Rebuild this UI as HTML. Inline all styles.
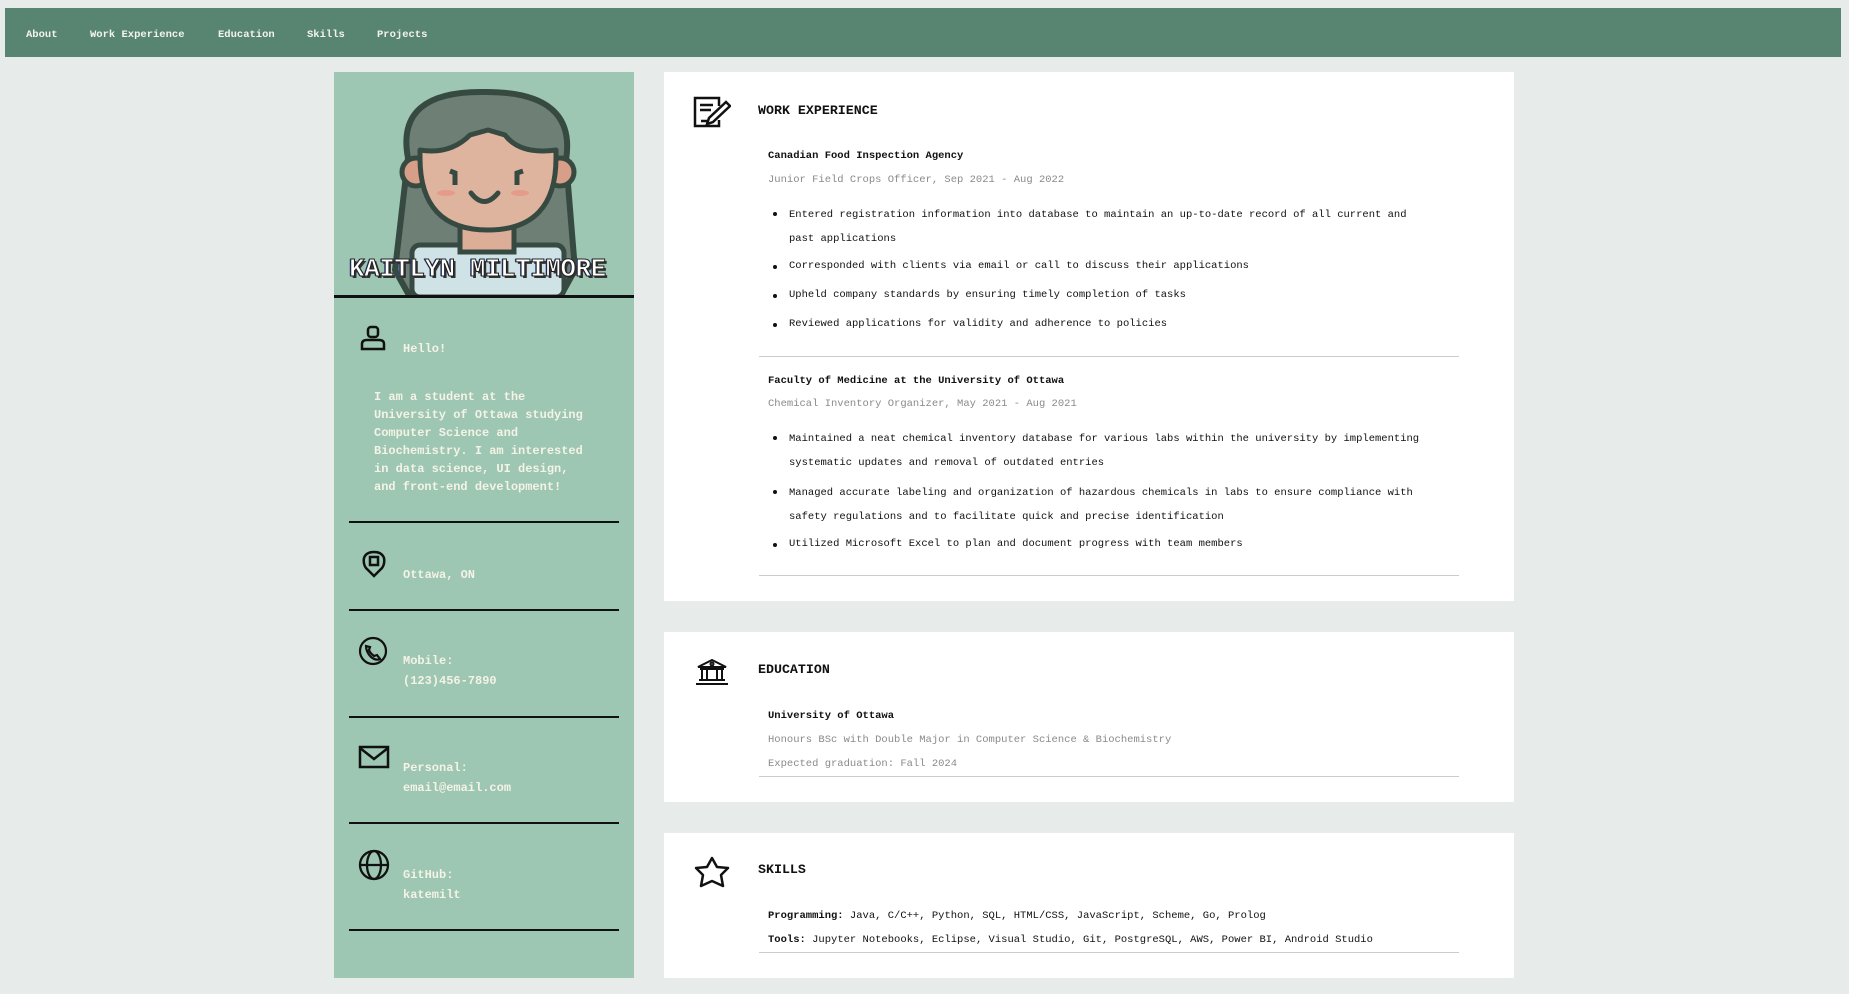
<!DOCTYPE html>
<html><head><meta charset="utf-8"><style>
*{margin:0;padding:0;box-sizing:border-box}
body{width:1849px;height:994px;background:#e7ebe9;font-family:"Liberation Mono",monospace;position:relative;overflow:hidden}
.a{position:absolute;white-space:nowrap}
nav{position:absolute;left:5px;top:8px;width:1836px;height:49px;background:#588472}
nav span{position:absolute;top:21px;font-size:10.5px;font-weight:bold;color:#f4f4ee}
#side{position:absolute;left:334px;top:72px;width:300px;height:906px;background:#9dc6b3}
.card{position:absolute;left:664px;width:850px;background:#fff}
.st{color:#f5f3e6;font-weight:bold;font-size:12px;line-height:20px}
.hr{position:absolute;left:349px;width:270px;height:2px;background:#111}
.h{font-size:13.3px;font-weight:bold;color:#111}
.co{font-size:10.5px;font-weight:bold;color:#111}
.sub{font-size:10.5px;color:#8a8a8a}
.li{font-size:10.5px;color:#111}
.dot{position:absolute;width:4px;height:4px;border-radius:2px;background:#111}
.dv{position:absolute;left:759px;width:700px;height:1px;background:#ccc}
</style></head><body>
<nav><span style="left:21px">About</span><span style="left:85px">Work Experience</span><span style="left:213px">Education</span><span style="left:302px">Skills</span><span style="left:372px">Projects</span></nav>
<div id="side"></div>
<svg class="a" style="left:334px;top:72px" width="300" height="226" viewBox="334 72 300 226">
<path d="M408 158 Q395 90 486 92 Q577 92 566 160 L575 270 L560 297 L410 297 L395 270 Z" fill="#6e7f76" stroke="#374a42" stroke-width="6" stroke-linejoin="round"/>
<rect x="412" y="245" width="152" height="52" rx="8" fill="#cfe3e6" stroke="#374a42" stroke-width="5"/>
<rect x="460" y="222" width="54" height="30" fill="#dcae98" stroke="#374a42" stroke-width="5"/>
<circle cx="416" cy="172" r="14" fill="#d89f88" stroke="#374a42" stroke-width="5"/>
<circle cx="560" cy="172" r="14" fill="#d89f88" stroke="#374a42" stroke-width="5"/>
<path d="M420 158 Q420 230 488 230 Q556 230 556 158 L556 150 Q520 155 505 135 L488 130 L470 135 Q450 155 420 150 Z" fill="#dfb49f" stroke="#374a42" stroke-width="5" stroke-linejoin="round"/>
<path d="M450 171 L455 173 L455 185 M523 171 L517 173 L517 185" stroke="#374a42" stroke-width="5" fill="none"/>
<ellipse cx="446" cy="193" rx="9" ry="3" fill="#e69a8a"/><ellipse cx="520" cy="193" rx="9" ry="3" fill="#e69a8a"/>
<path d="M471 193 Q484 210 498 193" stroke="#374a42" stroke-width="5" fill="none" stroke-linecap="round"/>
<rect x="334" y="295" width="300" height="3" fill="#111"/>
</svg>
<div class="a" style="left:349px;top:254px;font-size:26px;letter-spacing:-0.5px;font-weight:bold;color:#fff;-webkit-text-stroke:1px #222;text-shadow:2px 2px 0 #333,-1px 0 0 #35c">KAITLYN MILTIMORE</div>
<svg class="a" style="left:360px;top:325px" width="26" height="26" viewBox="0 0 26 26" fill="none" stroke="#111" stroke-width="2.5"><rect x="8" y="2" width="10" height="10" rx="3"/><path d="M2 24 L2 19 Q2 15 7 15 L19 15 Q24 15 24 19 L24 24 Z"/></svg>
<div class="a st" style="left:403px;top:339px">Hello!</div>
<div class="a st" style="left:374px;top:388px;font-size:12px;line-height:18px;white-space:pre">I am a student at the
University of Ottawa studying
Computer Science and
Biochemistry. I am interested
in data science, UI design,
and front-end development!</div>
<div class="hr" style="top:521px"></div>
<svg class="a" style="left:362px;top:550px" width="24" height="28" viewBox="0 0 24 28" fill="none" stroke="#111" stroke-width="2.5"><path d="M12 26 L4 18 Q1 14 2 8 Q4 2 12 2 Q20 2 22 8 Q23 14 20 18 Z"/><rect x="8" y="7" width="8" height="8"/></svg>
<div class="a st" style="left:403px;top:565px">Ottawa, ON</div>
<div class="hr" style="top:609px"></div>
<svg class="a" style="left:358px;top:636px" width="30" height="30" viewBox="0 0 30 30" fill="none" stroke="#111" stroke-width="2.2"><circle cx="15" cy="15" r="13"/><path d="M8 10 Q8 16 13 21 Q18 25 22 23 L19 19 L16 20 Q12 17 11 14 L12 11 Z"/></svg>
<div class="a st" style="left:403px;top:651px">Mobile:<br>(123)456-7890</div>
<div class="hr" style="top:716px"></div>
<svg class="a" style="left:358px;top:745px" width="32" height="24" viewBox="0 0 32 24" fill="none" stroke="#111" stroke-width="2.5"><rect x="2" y="2" width="28" height="20"/><path d="M2 3 L16 14 L30 3"/></svg>
<div class="a st" style="left:403px;top:758px">Personal:<br>email@email.com</div>
<div class="hr" style="top:822px"></div>
<svg class="a" style="left:358px;top:849px" width="32" height="32" viewBox="0 0 32 32" fill="none" stroke="#111" stroke-width="2.3"><circle cx="16" cy="16" r="14"/><ellipse cx="16" cy="16" rx="7" ry="14"/><path d="M2 16 L30 16"/></svg>
<div class="a st" style="left:403px;top:865px">GitHub:<br>katemilt</div>
<div class="hr" style="top:929px"></div>

<div class="card" style="top:72px;height:529px"></div>
<div class="card" style="top:632px;height:170px"></div>
<div class="card" style="top:833px;height:145px"></div>

<svg class="a" style="left:693px;top:96px" width="38" height="32" viewBox="0 0 38 32" fill="none" stroke="#111" stroke-width="2.5"><path d="M26 10 L26 2 L2 2 L2 30 L26 30 L26 24"/><path d="M7 9 L20 9 M7 14 L18 14"/><path d="M33 6 L37 10 L20 26 L14 28 L16 22 Z M8 25 L14 25"/></svg>
<div class="a h" style="left:758px;top:103px">WORK EXPERIENCE</div>
<div class="a co" style="left:768px;top:150px">Canadian Food Inspection Agency</div>
<div class="a sub" style="left:768px;top:174px">Junior Field Crops Officer, Sep 2021 - Aug 2022</div>
<div class="dot" style="left:773px;top:212px"></div>
<div class="a li" style="left:789px;top:203px;line-height:24px">Entered registration information into database to maintain an up-to-date record of all current and<br>past applications</div>
<div class="dot" style="left:773px;top:265px"></div><div class="a li" style="left:789px;top:260px">Corresponded with clients via email or call to discuss their applications</div>
<div class="dot" style="left:773px;top:294px"></div><div class="a li" style="left:789px;top:289px">Upheld company standards by ensuring timely completion of tasks</div>
<div class="dot" style="left:773px;top:323px"></div><div class="a li" style="left:789px;top:318px">Reviewed applications for validity and adherence to policies</div>
<div class="dv" style="top:356px"></div>
<div class="a co" style="left:768px;top:375px">Faculty of Medicine at the University of Ottawa</div>
<div class="a sub" style="left:768px;top:398px">Chemical Inventory Organizer, May 2021 - Aug 2021</div>
<div class="dot" style="left:773px;top:436px"></div>
<div class="a li" style="left:789px;top:427px;line-height:24px">Maintained a neat chemical inventory database for various labs within the university by implementing<br>systematic updates and removal of outdated entries</div>
<div class="dot" style="left:773px;top:490px"></div>
<div class="a li" style="left:789px;top:481px;line-height:24px">Managed accurate labeling and organization of hazardous chemicals in labs to ensure compliance with<br>safety regulations and to facilitate quick and precise identification</div>
<div class="dot" style="left:773px;top:543px"></div><div class="a li" style="left:789px;top:538px">Utilized Microsoft Excel to plan and document progress with team members</div>
<div class="dv" style="top:575px"></div>

<svg class="a" style="left:695px;top:658px" width="34" height="28" viewBox="0 0 34 28" fill="none" stroke="#111" stroke-width="2"><path d="M3 9 L17 2 L31 9 Z"/><circle cx="17" cy="6" r="1.5"/><path d="M5 11 L29 11 M7 12 L7 21 M12 12 L12 21 M22 12 L22 21 M27 12 L27 21 M4 22 L30 22 M1 26 L33 26"/></svg>
<div class="a h" style="left:758px;top:662px">EDUCATION</div>
<div class="a co" style="left:768px;top:710px">University of Ottawa</div>
<div class="a sub" style="left:768px;top:734px">Honours BSc with Double Major in Computer Science &amp; Biochemistry</div>
<div class="a sub" style="left:768px;top:758px">Expected graduation: Fall 2024</div>
<div class="dv" style="top:776px"></div>

<svg class="a" style="left:693px;top:856px" width="38" height="32" viewBox="0 0 38 32" fill="none" stroke="#111" stroke-width="2.5" stroke-linejoin="round"><path d="M19 2 L24 11 L35 12 L28 19 L30 30 L19 25 L8 30 L10 19 L3 12 L14 11 Z"/></svg>
<div class="a h" style="left:758px;top:862px">SKILLS</div>
<div class="a li" style="left:768px;top:910px"><b>Programming:</b> Java, C/C++, Python, SQL, HTML/CSS, JavaScript, Scheme, Go, Prolog</div>
<div class="a li" style="left:768px;top:934px"><b>Tools:</b> Jupyter Notebooks, Eclipse, Visual Studio, Git, PostgreSQL, AWS, Power BI, Android Studio</div>
<div class="dv" style="top:952px"></div>
</body></html>
